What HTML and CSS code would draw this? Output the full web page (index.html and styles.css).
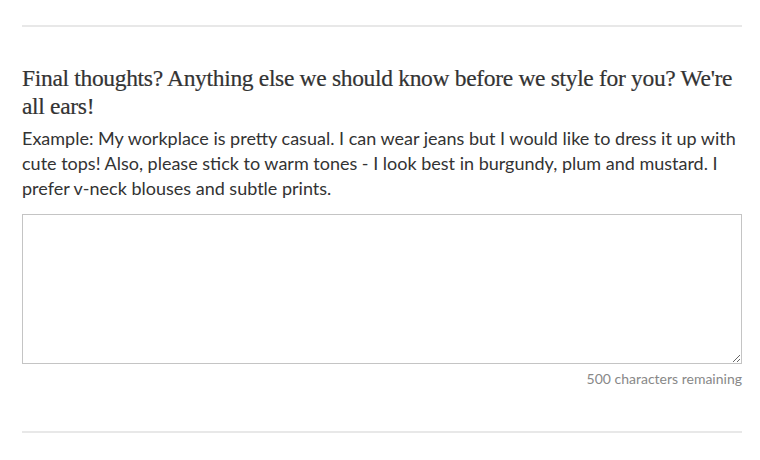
FILE: index.html
```html
<!DOCTYPE html>
<html>
<head>
<meta charset="utf-8">
<link rel="stylesheet" href="styles.css">
</head>
<body>
<div class="page">
  <hr class="rule">
  <section class="question">
    <h2 class="title">Final thoughts? Anything else we should know before we style for you? We're all ears!</h2>
    <p class="hint">Example: My workplace is pretty casual. I can wear jeans but I would like to dress it up with cute tops! Also, please stick to warm tones - I look best in burgundy, plum and mustard. I prefer v-neck blouses and subtle prints.</p>
    <textarea class="answer"></textarea>
    <div class="counter">500 characters remaining</div>
  </section>
  <hr class="rule">
</div>
</body>
</html>
```
FILE: styles.css
```css
html, body { margin: 0; padding: 0; background: #fff; }
.page { padding: 25px 18px 0 22px; width: 720px; }
.rule { border: 0; height: 2px; background: #e8e8e8; margin: 0; }
.question { padding-top: 37px; padding-bottom: 44px; }
.title {
  font-family: "Liberation Serif", serif;
  font-weight: normal;
  font-size: 23.5px;
  line-height: 28px;
  letter-spacing: -0.32px;
  color: #333;
  margin: 0 0 6px 0;
  -webkit-text-stroke: 0.2px #333;
}
.hint {
  font-family: Lato, "Open Sans", sans-serif;
  font-size: 18px;
  line-height: 25px;
  color: #333;
  margin: 0 0 13px 0;
}
.answer {
  display: block;
  box-sizing: border-box;
  width: 720px;
  height: 150px;
  border: 1px solid #c4c4c4;
  margin: 0;
  resize: vertical;
}
.counter {
  font-family: Lato, "Open Sans", sans-serif;
  font-size: 14px;
  color: #888;
  text-align: right;
  margin-top: 6px;
  line-height: 17px;
}
```
